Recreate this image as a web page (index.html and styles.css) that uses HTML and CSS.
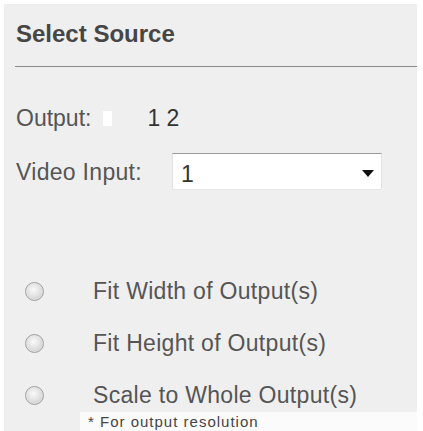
FILE: index.html
```html
<!DOCTYPE html>
<html>
<head>
<meta charset="utf-8">
<link rel="stylesheet" href="styles.css">
</head>
<body>
<div class="panel">
  <div class="title">Select Source</div>
  <div class="rule"></div>
  <div class="row output-row">
    <span class="label">Output:</span>
    <span class="blank"></span>
    <span class="value">1 2</span>
  </div>
  <div class="row input-row">
    <span class="label">Video Input:</span>
    <div class="select">
      <span class="sel-value">1</span>
      <span class="arrow"></span>
    </div>
  </div>
  <div class="options">
    <div class="option"><span class="radio"></span><span class="opt-label">Fit Width of Output(s)</span></div>
    <div class="option"><span class="radio"></span><span class="opt-label">Fit Height of Output(s)</span></div>
    <div class="option"><span class="radio"></span><span class="opt-label">Scale to Whole Output(s)</span></div>
  </div>
  <div class="footer">
    <div class="foot-left"></div>
    <div class="foot-note">* For output resolution</div>
  </div>
</div>
</body>
</html>
```

FILE: styles.css
```css
html, body {
  margin: 0;
  padding: 0;
  background: #ffffff;
}
body {
  font-family: "Liberation Sans", Arial, sans-serif;
  width: 423px;
  height: 431px;
  overflow: hidden;
}
.panel {
  margin: 4px 0 0 4px;
  width: 413px;
  height: 427px;
  background: #efefef;
  display: flex;
  flex-direction: column;
}
.title {
  padding: 17px 0 0 12px;
  font-size: 24px;
  line-height: 26px;
  font-weight: bold;
  color: #464646;
}
.rule {
  margin: 19px 0 0 11px;
  height: 2px;
  background: #8a8a8a;
}
.row {
  display: flex;
  align-items: center;
  padding-left: 12px;
  font-size: 23px;
  line-height: 26px;
  color: #555555;
}
.output-row {
  margin-top: 38px;
}
.blank {
  width: 9px;
  height: 15px;
  background: #ffffff;
  margin-left: 12px;
}
.value {
  margin-left: 35px;
  color: #333333;
}
.input-row {
  margin-top: 22px;
}
.input-row .label {
  letter-spacing: 0.3px;
}
.select {
  margin-left: 30px;
  width: 210px;
  height: 37px;
  background: #ffffff;
  border-top: 1px solid #9a9a9a;
  border-left: 1px solid #e2e2e2;
  border-right: 1px solid #e2e2e2;
  border-bottom: 1px solid #e6e6e6;
  box-sizing: border-box;
  display: flex;
  align-items: center;
  justify-content: space-between;
  padding: 4px 7px 0 8px;
}
.sel-value {
  color: #333333;
  font-size: 23px;
}
.arrow {
  width: 0;
  height: 0;
  border-left: 6px solid transparent;
  border-right: 6px solid transparent;
  border-top: 7px solid #111111;
}
.options {
  margin-top: 88px;
  display: flex;
  flex-direction: column;
  gap: 26px;
}
.option {
  display: flex;
  align-items: center;
  padding-left: 21px;
  font-size: 23px;
  line-height: 26px;
  color: #555555;
  letter-spacing: 0.3px;
}
.radio {
  width: 17px;
  height: 17px;
  border-radius: 50%;
  border: 1px solid #a0a0a0;
  background: radial-gradient(circle at 45% 40%, #fafafa 0%, #e0e0e0 50%, #c6c6c6 100%);
  box-shadow: inset 0 0 1px #ffffff;
  flex: none;
}
.opt-label {
  margin-left: 49px;
}
.footer {
  margin-top: 4px;
  flex: 1;
  display: flex;
}
.foot-left {
  width: 76px;
  background: #efefef;
}
.foot-note {
  flex: 1;
  background: #fbfbfb;
  padding-left: 8px;
  font-size: 15px;
  line-height: 19px;
  letter-spacing: 1px;
  color: #444444;
}
```
